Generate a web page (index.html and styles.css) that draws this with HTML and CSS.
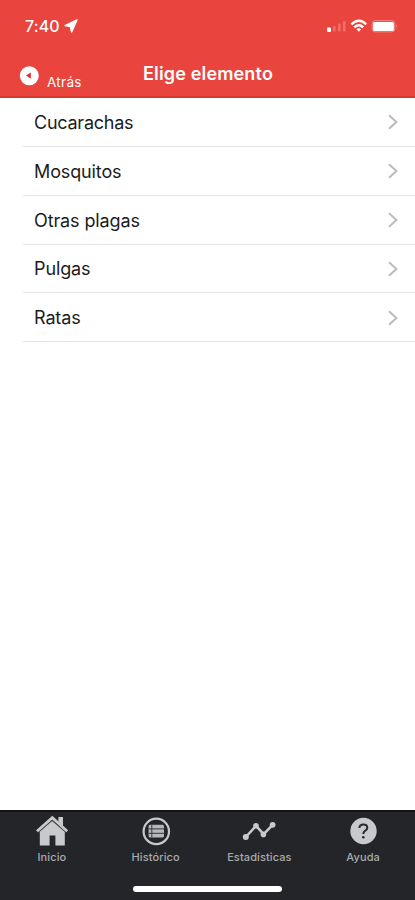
FILE: index.html
```html
<!DOCTYPE html>
<html lang="es">
<head>
<meta charset="utf-8">
<meta name="viewport" content="width=device-width, initial-scale=1">
<title>Elige elemento</title>
<link rel="stylesheet" href="styles.css">
</head>
<body>
<div class="app">
  <header class="header">
    <div class="status">
      <span class="time">7:40</span>
      <svg class="location" width="14" height="14" viewBox="0 0 14 14"><path d="M13 1 L1 6.6 L6.4 7.5 L7.6 13 Z" fill="#fff" stroke="#fff" stroke-width="1.4" stroke-linejoin="round"/></svg>
      <svg class="indicators" width="72" height="16" viewBox="0 0 72 16">
        <rect x="0" y="9.5" width="4" height="4.4" rx="1" fill="#fff"/>
        <g fill="#ef706a"><rect x="6" y="8" width="2.6" height="5.5" rx="1"/><rect x="11" y="5.5" width="2.6" height="8" rx="1"/><rect x="16" y="3" width="2.6" height="10.5" rx="1"/></g>
        <g fill="none" stroke="#fff" stroke-width="2.4"><path d="M24.4 6.3 Q32 -.6 39.2 6.3"/><path d="M27.3 9.3 Q32 5.2 36.3 9.3"/></g>
        <path d="M29.4 11.2 Q31.8 9.4 34.2 11.2 L31.8 13.8 Z" fill="#fff"/>
        <rect x="45.2" y="2.7" width="22.6" height="11.2" rx="3" fill="none" stroke="#f48d87"/>
        <rect x="46.1" y="3.9" width="20.8" height="9" rx="1.5" fill="#fff"/>
        <path d="M69.2 6.6 Q71.4 8.3 69.2 10 Z" fill="#f17c76"/>
      </svg>
    </div>
    <div class="nav">
      <a class="back">
        <svg width="20" height="20" viewBox="0 0 20 20"><circle cx="10.3" cy="9.7" r="9.5" fill="#fff"/><path d="M7.1 9.6 L11.8 6.4 V12.8 Z" fill="#d92e27"/></svg>
        <span>Atrás</span>
      </a>
      <h1 class="title">Elige elemento</h1>
    </div>
  </header>
  <ul class="list">
    <li class="row"><span class="tight">Cucarachas</span><svg class="chevron" width="10" height="16" viewBox="0 0 10 16"><path d="M1 1.2 L8.4 8 L1 14.8"/></svg></li>
    <li class="row"><span>Mosquitos</span><svg class="chevron" width="10" height="16" viewBox="0 0 10 16"><path d="M1 1.2 L8.4 8 L1 14.8"/></svg></li>
    <li class="row"><span>Otras plagas</span><svg class="chevron" width="10" height="16" viewBox="0 0 10 16"><path d="M1 1.2 L8.4 8 L1 14.8"/></svg></li>
    <li class="row"><span>Pulgas</span><svg class="chevron" width="10" height="16" viewBox="0 0 10 16"><path d="M1 1.2 L8.4 8 L1 14.8"/></svg></li>
    <li class="row"><span>Ratas</span><svg class="chevron" width="10" height="16" viewBox="0 0 10 16"><path d="M1 1.2 L8.4 8 L1 14.8"/></svg></li>
  </ul>
  <footer class="footer">
    <nav class="tabs">
      <a class="tab">
        <svg width="34" height="32" viewBox="0 0 34 32"><path d="M23.4 2 H28 V11 L23.4 7 Z" fill="#c7c9cb"/><path d="M4.8 16.5 L17 6 L29.8 16.5 V30.6 H20.4 V20.4 H14.6 V30.6 H4.8 Z" fill="#c7c9cb"/><path d="M2 16.2 L17.3 2.6 L32.2 16.2" fill="none" stroke="#c7c9cb" stroke-width="2.8"/><path d="M3.6 17.4 L17.2 5.4 L30.6 17.4" fill="none" stroke="#55575a" stroke-width=".9"/></svg>
        <span>Inicio</span>
      </a>
      <a class="tab">
        <svg width="34" height="32" viewBox="0 0 34 32"><circle cx="17.3" cy="16.4" r="12.7" fill="none" stroke="#c7c9cb" stroke-width="2.2"/><rect x="9.6" y="9.7" width="15.4" height="12.8" rx="1.5" fill="#b5b7b9"/><path d="M9.6 13.9 H25 M9.6 18.3 H25 M12.8 9.7 V22.5" stroke="#38393d" stroke-width="1"/></svg>
        <span>Histórico</span>
      </a>
      <a class="tab">
        <svg width="34" height="32" viewBox="0 0 34 32"><path d="M3.8 22 L14 10.8 L21.7 19.2 L30.6 9.8" fill="none" stroke="#c7c9cb" stroke-width="2.5"/><g fill="#c7c9cb"><circle cx="3.8" cy="22" r="3"/><circle cx="14" cy="10.8" r="2.8"/><circle cx="21.4" cy="19.4" r="2.8"/><circle cx="30.6" cy="9.8" r="2.9"/></g></svg>
        <span>Estadísticas</span>
      </a>
      <a class="tab">
        <svg width="34" height="32" viewBox="0 0 34 32"><circle cx="17.5" cy="16" r="13.2" fill="#c7c9cb"/><path d="M13.4 13 Q13.5 9.4 17.3 9.4 Q21.3 9.4 21.3 12.7 Q21.3 14.6 19 15.9 Q17.3 17 17.3 19" fill="none" stroke="#28292c" stroke-width="2"/><circle cx="17.3" cy="22.2" r="1.3" fill="#28292c"/></svg>
        <span>Ayuda</span>
      </a>
    </nav>
    <div class="home-indicator"></div>
  </footer>
</div>
</body>
</html>
```
FILE: styles.css
```css
* { box-sizing: border-box; }
body { margin: 0; background: #fff; font-family: Inter, "Liberation Sans", sans-serif; }
.app { width: 415px; height: 900px; display: flex; flex-direction: column; overflow: hidden; }
.header { height: 98px; flex: none; background: #e9443e; border-bottom: 2px solid #d7382d; color: #fff; }
.status { height: 50px; padding: 1px 16px 0 25px; display: flex; align-items: center; }
.time { width: 36px; font-size: 16px; font-weight: 500; letter-spacing: 0.1px; white-space: nowrap; }
.location { margin-left: 3px; }
.indicators { margin-left: auto; }
.nav { height: 46px; display: grid; grid-template-columns: 143px 130px 1fr; }
.back { padding: 16px 0 0 19px; display: flex; align-items: flex-start; gap: 8px; font-size: 13.5px; line-height: 16px; letter-spacing: 0.3px; }
.back span { margin-top: 8px; }
.title { margin: 13px 0 0; font-size: 18px; line-height: 22px; font-weight: 600; letter-spacing: 0.16px; white-space: nowrap; }
.list { margin: 0; padding: 0 0 0 23px; list-style: none; flex: 1; }
.row { height: 48.85px; padding: 1px 17px 0 11px; display: flex; align-items: center; justify-content: space-between; border-bottom: 1px solid #e5e5e5; font-size: 18px; letter-spacing: -0.12px; color: #1c1c1c; }
.tight { letter-spacing: -0.25px; }
.chevron { fill: none; stroke: #bcbcbc; stroke-width: 2; }
.footer { height: 90px; flex: none; background: #242529; border-top: 2px solid #111216; display: flex; flex-direction: column; align-items: center; justify-content: space-between; padding-bottom: 8px; }
.tabs { width: 100%; display: grid; grid-template-columns: repeat(4, 1fr); padding-top: 3px; }
.tab { display: flex; flex-direction: column; align-items: center; gap: 3px; color: #a9aaac; font-size: 11px; line-height: 14px; font-weight: 500; letter-spacing: 0.1px; }
.home-indicator { width: 149px; height: 6px; border-radius: 3px; background: #fff; }
```
